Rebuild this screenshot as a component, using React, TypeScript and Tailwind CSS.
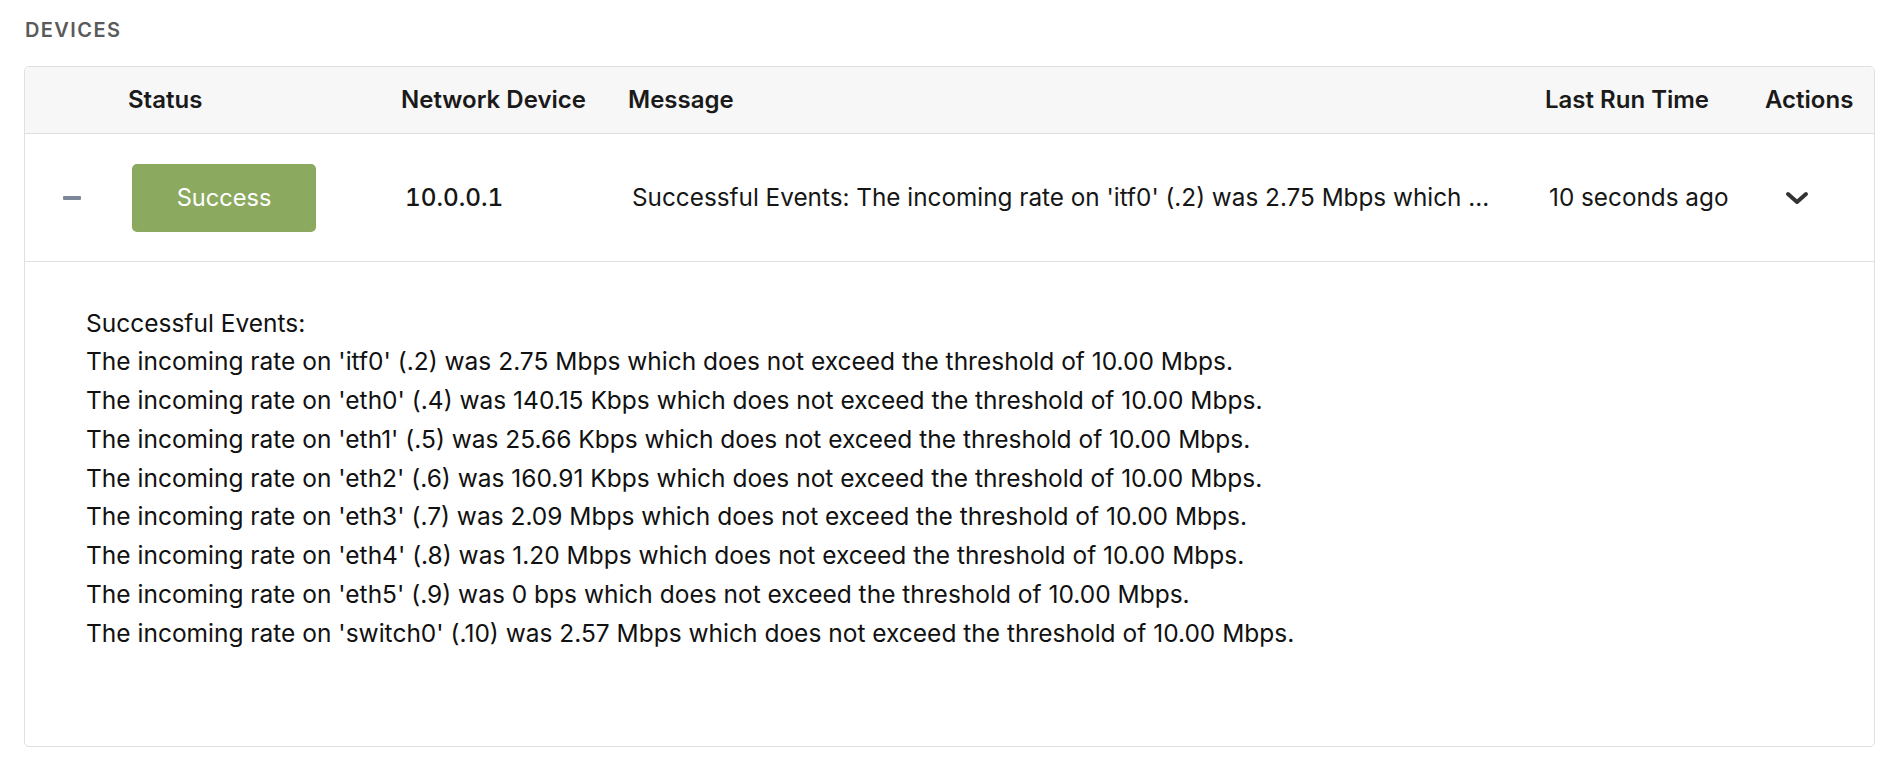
import React from 'react';

const lines = [
    "The incoming rate on 'itf0' (.2) was 2.75 Mbps which does not exceed the threshold of 10.00 Mbps.",
    "The incoming rate on 'eth0' (.4) was 140.15 Kbps which does not exceed the threshold of 10.00 Mbps.",
    "The incoming rate on 'eth1' (.5) was 25.66 Kbps which does not exceed the threshold of 10.00 Mbps.",
    "The incoming rate on 'eth2' (.6) was 160.91 Kbps which does not exceed the threshold of 10.00 Mbps.",
    "The incoming rate on 'eth3' (.7) was 2.09 Mbps which does not exceed the threshold of 10.00 Mbps.",
    "The incoming rate on 'eth4' (.8) was 1.20 Mbps which does not exceed the threshold of 10.00 Mbps.",
    "The incoming rate on 'eth5' (.9) was 0 bps which does not exceed the threshold of 10.00 Mbps.",
    "The incoming rate on 'switch0' (.10) was 2.57 Mbps which does not exceed the threshold of 10.00 Mbps.",
];

const summary = 'Successful Events: ' + lines[0];
const shorten = (s: string, n: number) => (s.length > n ? s.slice(0, n) + '...' : s);

const ChevronDown = () => (
    <svg width="24" height="14" viewBox="0 0 24 14" fill="none">
        <path d="M3 3 L12 11 L21 3" stroke="#333333" strokeWidth="4" strokeLinecap="round" strokeLinejoin="round" />
    </svg>
);

const cols = 'grid grid-cols-[103px_273px_227px_917px_220px_1fr]';

const App = () => {
    return (
        <div className="min-h-screen bg-white pt-[18px] pl-[24px] pr-[23px] font-['Inter',sans-serif] text-[#161616]">
            <h2 className="h-[24px] pl-[1px] text-[20px] leading-[24px] font-semibold tracking-[1.4px] text-[#5a5a5a]">
                DEVICES
            </h2>

            <div className="mt-[24px] rounded-[5px] border border-[#e0e0e0] overflow-hidden">
                {/* header */}
                <div className={`${cols} h-[67px] items-center border-b border-[#e0e0e0] bg-[#f7f7f7] text-[24px] font-semibold text-[#1a1a1a]`}>
                    <div />
                    <div>Status</div>
                    <div>Network Device</div>
                    <div>Message</div>
                    <div>Last Run Time</div>
                    <div>Actions</div>
                </div>

                {/* row */}
                <div className={`${cols} h-[128px] items-center border-b border-[#e0e0e0] text-[24.3px]`}>
                    <div className="pl-[38px]">
                        <div className="h-[4px] w-[18px] rounded-[1px] bg-[#7c8798]" />
                    </div>
                    <div className="pl-[4px]">
                        <div className="flex h-[68px] w-[184px] items-center justify-center rounded-[5px] bg-[#8ba95f] text-[23.6px] text-white">
                            Success
                        </div>
                    </div>
                    <div className="pl-[4px] font-medium tabular-nums">10.0.0.1</div>
                    <div className="min-w-0 pl-[4px] whitespace-nowrap">{shorten(summary, 72)}</div>
                    <div className="pl-[4px]">10 seconds ago</div>
                    <div className="flex pl-[20px]">
                        <ChevronDown />
                    </div>
                </div>

                {/* details */}
                <div className="pt-[41.7px] pb-[93.5px] pl-[61px] text-[24.5px] leading-[38.75px] text-[#111111]">
                    <div>Successful Events:</div>
                    {lines.map((l) => (
                        <div key={l}>{l}</div>
                    ))}
                </div>
            </div>
        </div>
    );
};

export default App;
